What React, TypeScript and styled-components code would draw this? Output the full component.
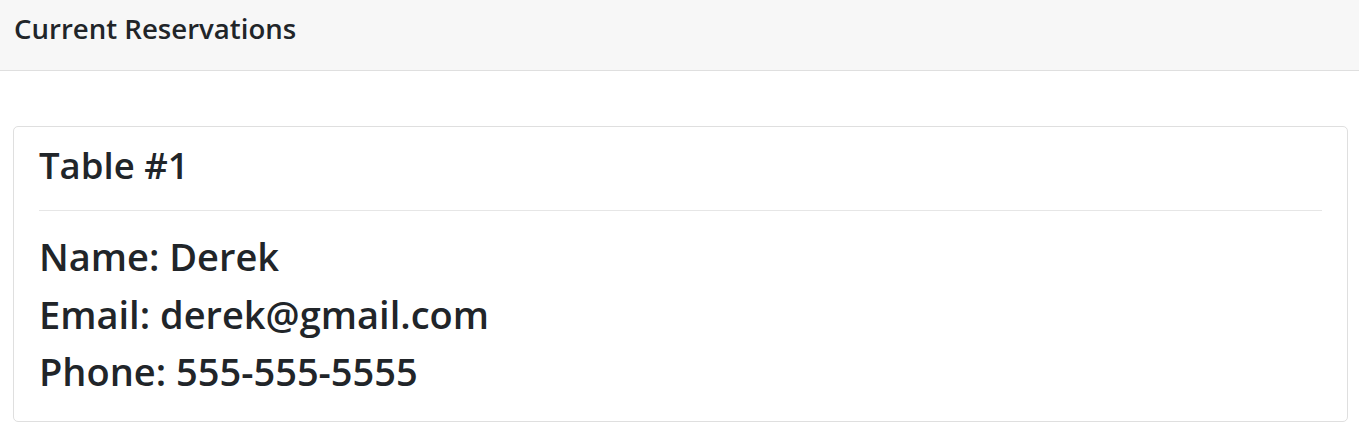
import React from "react";
import styled, { createGlobalStyle } from "styled-components";

const GlobalStyle = createGlobalStyle`
  html, body {
    margin: 0;
    padding: 0;
    background: #ffffff;
  }
  body {
    font-family: "Open Sans", "Noto Sans", Arial, sans-serif;
    color: #212529;
  }
  * { box-sizing: border-box; }
`;

const Panel = styled.section`
  display: flex;
  flex-direction: column;
  width: 100%;
`;

const PanelHeader = styled.header`
  height: 71px;
  padding: 7px 14px 0;
  background: #f7f7f7;
  border-bottom: 1px solid #dfdfdf;
  font-size: 27.6px;
  line-height: 42px;
  font-weight: 600;
  color: #212529;
`;

const PanelBody = styled.div`
  display: flex;
  flex-direction: column;
  padding: 55px 11px 16px 13px;
`;

const Card = styled.article`
  border: 1px solid #dfdfdf;
  border-radius: 5px;
  padding: 15px 25px 20px;
  display: flex;
  flex-direction: column;
`;

const Title = styled.h4`
  margin: 0;
  font-size: 36.5px;
  line-height: 47px;
  font-weight: 600;
`;

const Divider = styled.hr`
  margin: 21px 0 17px;
  border: 0;
  border-top: 1px solid #e6e6e6;
  height: 0;
`;

const InfoLine = styled.p`
  margin: 0;
  font-size: 38px;
  line-height: 57.6px;
  font-weight: 600;
`;

const reservation = {
  table: 1,
  name: "Derek",
  email: "derek@gmail.com",
  phone: "555-555-5555",
};

export default function App() {
  return (
    <>
      <GlobalStyle />
      <Panel>
        <PanelHeader>Current Reservations</PanelHeader>
        <PanelBody>
          <Card>
            <Title>Table #{reservation.table}</Title>
            <Divider />
            <InfoLine>Name: {reservation.name}</InfoLine>
            <InfoLine>Email: {reservation.email}</InfoLine>
            <InfoLine>Phone: {reservation.phone}</InfoLine>
          </Card>
        </PanelBody>
      </Panel>
    </>
  );
}
